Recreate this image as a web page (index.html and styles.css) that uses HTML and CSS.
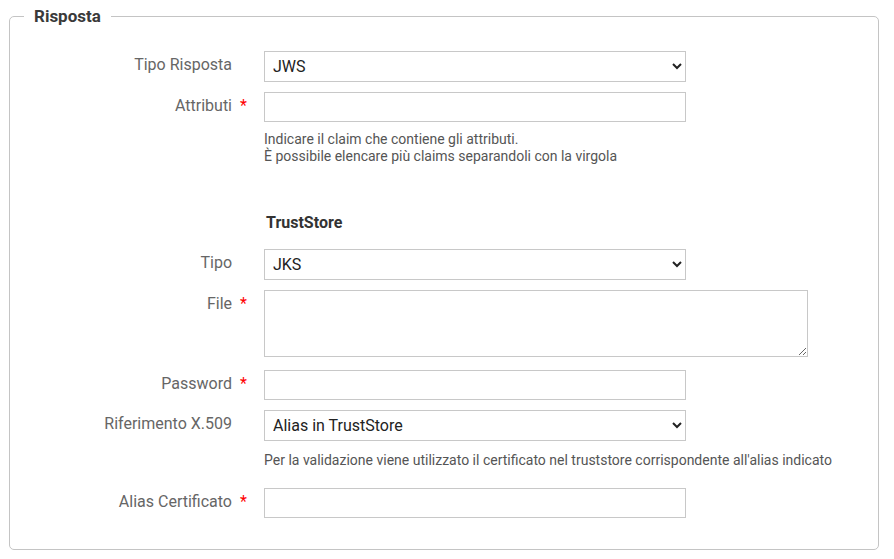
FILE: index.html
```html
<!DOCTYPE html>
<html lang="it">
<head>
<meta charset="utf-8">
<title>Risposta</title>
<link rel="stylesheet" href="styles.css">
</head>
<body>
<div class="page">
  <fieldset class="panel">
    <legend class="panel-title">Risposta</legend>

    <div class="row row-first">
      <label class="row-label">Tipo Risposta</label>
      <div class="row-field">
        <select class="ctl ctl-select"><option>JWS</option></select>
      </div>
    </div>

    <div class="row">
      <label class="row-label">Attributi<span class="req">*</span></label>
      <div class="row-field">
        <input class="ctl ctl-input" type="text">
        <p class="help">Indicare il claim che contiene gli attributi.<br>È possibile elencare più claims separandoli con la virgola</p>
      </div>
    </div>

    <div class="subhead">TrustStore</div>

    <div class="row">
      <label class="row-label">Tipo</label>
      <div class="row-field">
        <select class="ctl ctl-select"><option>JKS</option></select>
      </div>
    </div>

    <div class="row">
      <label class="row-label">File<span class="req">*</span></label>
      <div class="row-field">
        <textarea class="ctl ctl-area"></textarea>
      </div>
    </div>

    <div class="row row-after-area">
      <label class="row-label">Password<span class="req">*</span></label>
      <div class="row-field">
        <input class="ctl ctl-input" type="password">
      </div>
    </div>

    <div class="row">
      <label class="row-label">Riferimento X.509</label>
      <div class="row-field">
        <select class="ctl ctl-select"><option>Alias in TrustStore</option></select>
        <p class="help help-one">Per la validazione viene utilizzato il certificato nel truststore corrispondente all'alias indicato</p>
      </div>
    </div>

    <div class="row">
      <label class="row-label">Alias Certificato<span class="req">*</span></label>
      <div class="row-field">
        <input class="ctl ctl-input" type="text">
      </div>
    </div>
  </fieldset>
</div>
</body>
</html>
```

FILE: styles.css
```css
html, body {
  margin: 0;
  padding: 0;
  background: #ffffff;
}

body {
  font-family: Roboto, "Liberation Sans", Arial, sans-serif;
  font-size: 16px;
  color: #333333;
}

.page {
  padding: 6px 15px 9px 9px;
}

.panel {
  margin: 0;
  border: 1px solid #c4c4c4;
  border-radius: 5px;
  padding: 0 14px 31px 14px;
  min-width: 0;
}

.panel-title {
  padding: 0 10px;
  font-size: 17px;
  font-weight: 700;
  line-height: 20px;
  color: #3a3a3a;
}

.row {
  display: flex;
  align-items: flex-start;
  margin-top: 10px;
}

.row-first {
  margin-top: 25px;
}

.row-after-area {
  margin-top: 13px;
}

.row-label {
  flex: 0 0 208px;
  width: 208px;
  margin-right: 32px;
  text-align: right;
  color: #666666;
  font-size: 16px;
  line-height: 19px;
  padding-top: 4px;
}

.req {
  color: #ff0000;
  margin-left: 8px;
  margin-right: -16px;
  display: inline-block;
  width: 8px;
  text-align: left;
}

.row-field {
  flex: 1 1 auto;
  min-width: 0;
}

.ctl {
  display: block;
  box-sizing: border-box;
  margin: 0;
  border: 1px solid #c8c8c8;
  border-radius: 0;
  background: #ffffff;
  font-family: Roboto, "Liberation Sans", Arial, sans-serif;
  font-size: 16px;
  color: #222222;
  outline: none;
}

.ctl-select {
  width: 422px;
  height: 31px;
  padding: 0 4px;
}

.ctl-input {
  width: 422px;
  height: 30px;
  padding: 0 8px;
}

.ctl-area {
  width: 544px;
  height: 67px;
  padding: 4px 8px;
  resize: vertical;
}

.help {
  margin: 9px 0 0 0;
  font-size: 14px;
  line-height: 17px;
  color: #555555;
}

.help-one {
  margin-top: 11px;
  margin-bottom: 9px;
}

.subhead {
  margin: 48px 0 16px 242px;
  font-size: 16px;
  font-weight: 700;
  line-height: 20px;
  color: #333333;
}
```
